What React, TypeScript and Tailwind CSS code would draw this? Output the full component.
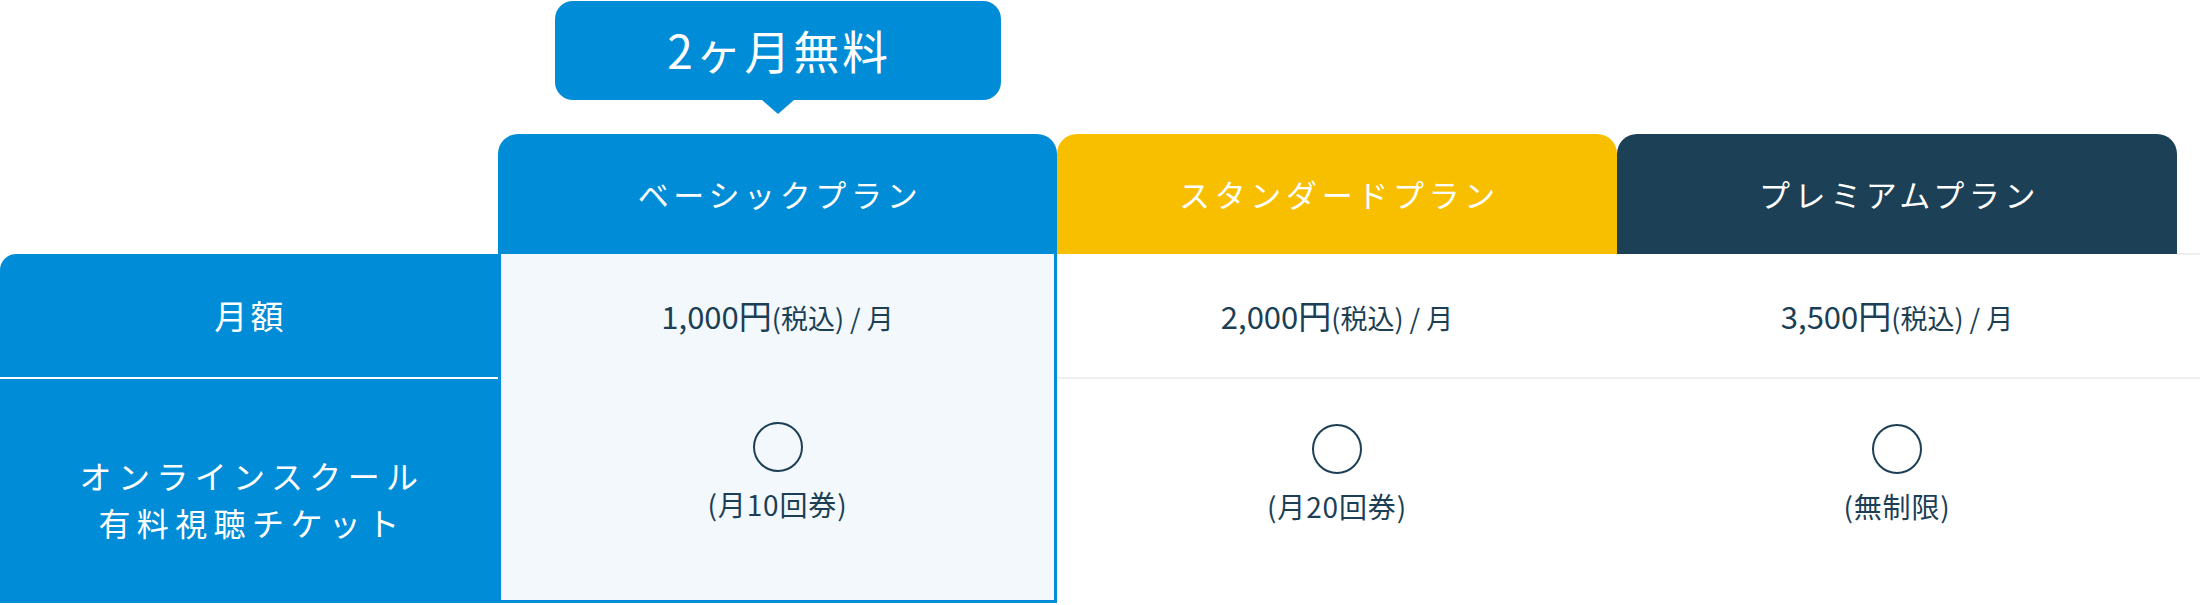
import React from "react";

type Plan = {
  name: string;
  price: string;
  ticket: string;
  headBg: string;
  featured?: boolean;
};

const plans: Plan[] = [
  { name: "ベーシックプラン", price: "1,000", ticket: "(月10回券)", headBg: "bg-[#008cd6]", featured: true },
  { name: "スタンダードプラン", price: "2,000", ticket: "(月20回券)", headBg: "bg-[#f8bf00]" },
  { name: "プレミアムプラン", price: "3,500", ticket: "(無制限)", headBg: "bg-[#1c4055]" },
];

const font = { fontFamily: '"Noto Sans CJK JP", "Noto Sans", sans-serif' };

// 価格セル
const PriceText = ({ price }: { price: string }) => (
  <div className="flex items-baseline text-[#1c3f55]">
    <span className="text-[31px] leading-none">{price}</span>
    <span className="text-[33px] leading-none">円</span>
    <span className="text-[27px] leading-none">(税込)</span>
    <span className="text-[27px] leading-none mx-[6px]">/</span>
    <span className="text-[27px] leading-none">月</span>
  </div>
);

const TicketCell = ({ ticket }: { ticket: string }) => (
  <div className="flex flex-col items-center pt-[45px]">
    <div className="w-[50px] h-[50px] rounded-full border-2 border-[#1c3f55]" />
    <div className="mt-[14px] text-[28px] leading-[36px] tracking-[0.03em] text-[#1c3f55]">{ticket}</div>
  </div>
);

const PlanColumn = ({ plan, width }: { plan: Plan; width: string }) => (
  <div className={`${width} shrink-0 flex flex-col`}>
    <div
      className={`h-[120px] ${plan.headBg} rounded-t-[20px] flex items-center justify-center text-white text-[31px] tracking-[0.15em] pl-[5px]`}
    >
      {plan.name}
    </div>
    {plan.featured ? (
      <div className="flex flex-col bg-[#f2f8fc] border-x-[3px] border-b-[3px] border-[#008cd6]">
        <div className="h-[123px] flex items-center justify-center">
          <PriceText price={plan.price} />
        </div>
        <div className="h-[223px]">
          <TicketCell ticket={plan.ticket} />
        </div>
      </div>
    ) : (
      <div className="flex flex-col bg-white">
        <div className="h-[123px] flex items-center justify-center">
          <PriceText price={plan.price} />
        </div>
        <div className="h-[226px] border-t-2 border-[#efefef]">
          <TicketCell ticket={plan.ticket} />
        </div>
      </div>
    )}
  </div>
);

export default function App() {
  return (
    <div className="w-[2200px] h-[605px] bg-white overflow-hidden" style={font}>
      {/* バッジ */}
      <div className="h-[134px] flex">
        <div className="w-[498px] shrink-0" />
        <div className="w-[559px] shrink-0 flex flex-col items-center pt-px">
          <div className="w-[446px] h-[99px] rounded-[18px] bg-[#008cd6] flex items-center justify-center pb-[4px] pl-[3px] text-white text-[46px] leading-none tracking-[0.06em]">
            2ヶ月無料
          </div>
          <div className="w-0 h-0 border-x-[16px] border-t-[14px] border-x-transparent border-t-[#008cd6]" />
        </div>
      </div>

      {/* 比較表 */}
      <div className="flex">
        <div className="w-[498px] shrink-0 flex flex-col">
          <div className="h-[120px]" />
          <div className="rounded-tl-[16px] bg-[#008cd6] text-white">
            <div className="h-[123px] flex items-center justify-center text-[33px] tracking-[0.1em] pl-[3px]">
              月額
            </div>
            <div className="h-[2px] bg-white" />
            <div className="h-[224px] flex flex-col items-center pt-[73px] text-[32px] leading-[47px] tracking-[0.2em] pl-[6px]">
              <div>オンラインスクール</div>
              <div>有料視聴チケット</div>
            </div>
          </div>
        </div>
        <PlanColumn plan={plans[0]} width="w-[559px]" />
        <PlanColumn plan={plans[1]} width="w-[560px]" />
        <PlanColumn plan={plans[2]} width="w-[560px]" />
        <div className="flex-1 flex flex-col">
          <div className="h-[119px]" />
          <div className="h-[124px] border-t-2 border-[#efefef]" />
          <div className="h-[226px] border-t-2 border-[#efefef]" />
        </div>
      </div>
    </div>
  );
}
